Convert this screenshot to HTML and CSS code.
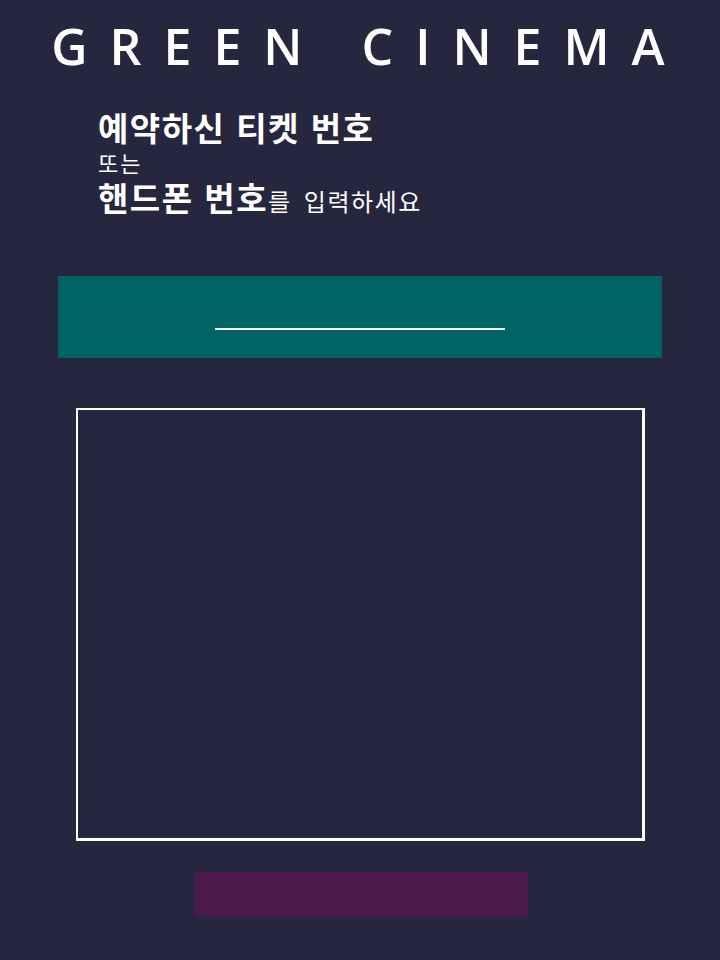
FILE: index.html
```html
<!DOCTYPE html>
<html lang="ko">
<head>
  <meta charset="UTF-8">
  <title>Green Cinema</title>
  <link rel="stylesheet" href="styles.css">
</head>
<body>
  <h1 class="logo">GREEN CINEMA</h1>

  <!-- Guide text -->
  <div class="guide">
    <p class="big">예약하신 티켓 번호</p>
    <p class="small">또는</p>
    <p class="big">핸드폰 번호<span class="mid">를 입력하세요</span></p>
  </div>

  <!-- Input bar -->
  <div class="input-bar">
    <input type="text" class="ticket-input" />
  </div>

  <!-- Keypad area -->
  <div class="pad"></div>

  <button class="submit-btn"></button>
</body>
</html>
```

FILE: styles.css
```css
body {
  margin: 0;
  background: #27263f;
  color: #fff;
  font-family: "Open Sans", "Noto Sans CJK KR", sans-serif;
  width: 720px;
  height: 960px;
  overflow: hidden;
}
.logo {
  margin: 16px 0 0;
  font-size: 50px;
  font-weight: 600;
  letter-spacing: 22px;
  text-align: center;
  padding-left: 18px;
  line-height: 60px;
  word-spacing: 2px;
}
.guide {
  margin: 32px 0 0 98px;
  font-family: "Noto Sans CJK KR", sans-serif;
}
.guide p {
  margin: 0;
}
.big {
  font-size: 33px;
  font-weight: 700;
  line-height: 38px;
  letter-spacing: 1.5px;
}
.small {
  font-size: 22px;
  line-height: 32px;
  letter-spacing: 2px;
}
.mid {
  font-size: 24px;
  font-weight: 400;
  letter-spacing: 1.5px;
  word-spacing: 4px;
}
.input-bar {
  margin: 56px 0 0 58px;
  width: 604px;
  height: 82px;
  background: #006466;
  display: flex;
  justify-content: center;
}
.ticket-input {
  margin-top: 42px;
  width: 290px;
  height: 10px;
  padding: 0;
  background: transparent;
  border: none;
  border-bottom: 2px solid #fff;
  outline: none;
}
.pad {
  margin: 50px 0 0 76px;
  width: 564px;
  height: 428px;
  border: 2px solid #fff;
  border-right-width: 3px;
  border-bottom-width: 3px;
}
.submit-btn {
  display: block;
  margin: 31px 0 0 194px;
  width: 334px;
  height: 44px;
  background: #4e1a4d;
  border: none;
  padding: 0;
}
```
